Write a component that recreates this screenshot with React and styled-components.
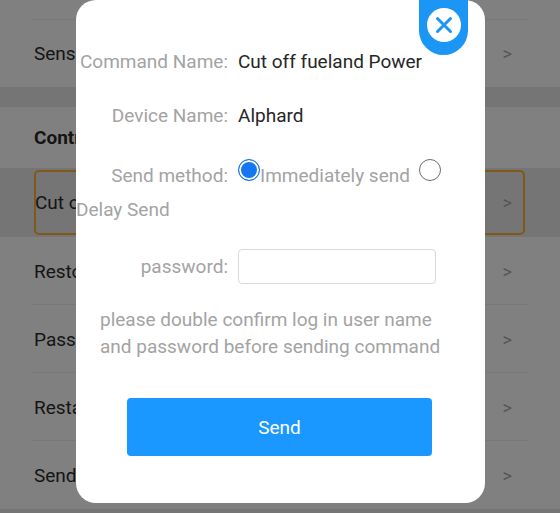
import React from 'react';
import styled, { createGlobalStyle } from 'styled-components';

const Global = createGlobalStyle`
html, body { margin: 0; padding: 0; background: #808080; }
body { font-family: Roboto, "Liberation Sans", sans-serif; }
`;

const Page = styled.div`
  position: relative;
  width: 560px;
  height: 513px;
  overflow: hidden;
  background: #808080;
`;

const Section = styled.div`
  padding-top: ${p => p.top || 0}px;
  background: #808080;
`;

const Gap = styled.div`
  height: ${p => p.size}px;
  background: #757575;
`;

const Row = styled.div`
  height: 68px;
  box-sizing: border-box;
  margin-left: 32px;
  margin-right: 32px;
  display: flex;
  align-items: center;
  justify-content: space-between;
  padding: 2px 2px 0;
  font-size: 19px;
  color: #141414;
  border-bottom: 1px solid ${p => (p.last ? 'transparent' : '#787878')};
`;

const TopRow = styled(Row)`
  border-top: 1px solid #787878;
  padding-top: 0;
`;

const TitleRow = styled(Row)`
  font-weight: 700;
  height: 61px;
  padding-top: 0;
  border-bottom: 0;
`;

const ActiveBand = styled.div`
  height: 69px;
  background: #757575;
  padding: 2px 35px 2px 34px;
  box-sizing: border-box;
`;

const ActiveRow = styled.div`
  height: 65px;
  box-sizing: border-box;
  border: 2px solid #80591a;
  border-radius: 5px;
  display: flex;
  align-items: center;
  justify-content: space-between;
  font-size: 19px;
  color: #141414;
  text-indent: -1px;
  padding-right: 11px;
`;

const Arrow = styled.span`
  font-size: 18px;
  color: #555;
  margin-right: 14px;
`;

const ActiveArrow = styled(Arrow)`
  margin-right: 0;
`;

const Modal = styled.div`
  position: absolute;
  left: 76px;
  top: 0;
  width: 409px;
  height: 503px;
  background: #fff;
  border-radius: 20px;
  font-size: 19px;
  color: #a3a3a3;
  box-sizing: border-box;
  padding-top: 49px;
`;

const CloseTab = styled.button`
  position: absolute;
  top: 0;
  right: 17px;
  width: 49px;
  height: 55px;
  border: 0;
  padding: 8px 0 0;
  background: #1c96f5;
  border-radius: 0 0 24.5px 24.5px;
  display: flex;
  align-items: flex-start;
  justify-content: center;
`;

const CloseDisc = styled.span`
  width: 34px;
  height: 34px;
  border-radius: 50%;
  background: #fff;
  display: flex;
  align-items: center;
  justify-content: center;
`;

const Field = styled.div`
  line-height: 26px;
  margin-bottom: ${p => p.gap}px;
`;

const MethodField = styled.div`
  line-height: 34px;
  margin-top: 30px;
`;

const Label = styled.span`
  display: inline-block;
  width: 152px;
  text-align: right;
  margin-right: 10px;
`;

const Value = styled.span`
  color: #262626;
`;

const Radio = styled.span`
  display: inline-block;
  box-sizing: border-box;
  width: 22px;
  height: 22px;
  border-radius: 50%;
  vertical-align: 1px;
  border: 1.5px solid ${p => (p.checked ? '#1976e0' : '#6f6f6f')};
  background: ${p => (p.checked ? '#1577f2' : '#fff')};
  box-shadow: ${p => (p.checked ? 'inset 0 0 0 2px #fff' : 'none')};
`;

const RadioText = styled.span`
  margin-right: 9px;
`;

const PasswordField = styled.div`
  display: flex;
  align-items: center;
  margin-bottom: 22px;
  margin-top: 22px;
`;

const Input = styled.input`
  width: 198px;
  height: 35px;
  box-sizing: border-box;
  border: 1px solid #d9d9d9;
  border-radius: 4px;
  outline: none;
  background: #fff;
`;

const Note = styled.p`
  margin: 0 0 38px 24px;
  width: 350px;
  line-height: 27px;
`;

const SendButton = styled.button`
  display: block;
  margin-left: 51px;
  width: 305px;
  height: 58px;
  border: 0;
  border-radius: 4px;
  background: #1a98ff;
  color: #fff;
  font-family: inherit;
  font-size: 19px;
`;

const rows = ['Restore fuel', 'Password', 'Restart', 'Send'];

export default function App() {
  return (
    <Page>
      <Global />
      <Section top={19}>
        <TopRow last>
          Sensor<Arrow>&gt;</Arrow>
        </TopRow>
      </Section>
      <Gap size={20} />
      <TitleRow>Control</TitleRow>
      <ActiveBand>
        <ActiveRow>
          Cut off<ActiveArrow>&gt;</ActiveArrow>
        </ActiveRow>
      </ActiveBand>
      {rows.map((r, i) => (
        <Row key={r} last={i === rows.length - 1}>
          {r}
          <Arrow>&gt;</Arrow>
        </Row>
      ))}
      <Gap size={4} />

      <Modal>
        <CloseTab aria-label="close">
          <CloseDisc>
            <svg width="18" height="18" viewBox="0 0 18 18">
              <path d="M2.5 2.5 L15.5 15.5 M15.5 2.5 L2.5 15.5" stroke="#1c96f5" strokeWidth="3" strokeLinecap="round" />
            </svg>
          </CloseDisc>
        </CloseTab>
        <Field gap={28}>
          <Label>Command Name:</Label>
          <Value>Cut off fueland Power</Value>
        </Field>
        <Field gap={0}>
          <Label>Device Name:</Label>
          <Value>Alphard</Value>
        </Field>
        <MethodField>
          <Label>Send method:</Label>
          <Radio checked />
          <RadioText>Immediately send</RadioText>
          <Radio />
          <br />
          Delay Send
        </MethodField>
        <PasswordField>
          <Label>password:</Label>
          <Input type="text" />
        </PasswordField>
        <Note>please double confirm log in user name and password before sending command</Note>
        <SendButton>Send</SendButton>
      </Modal>
    </Page>
  );
}
